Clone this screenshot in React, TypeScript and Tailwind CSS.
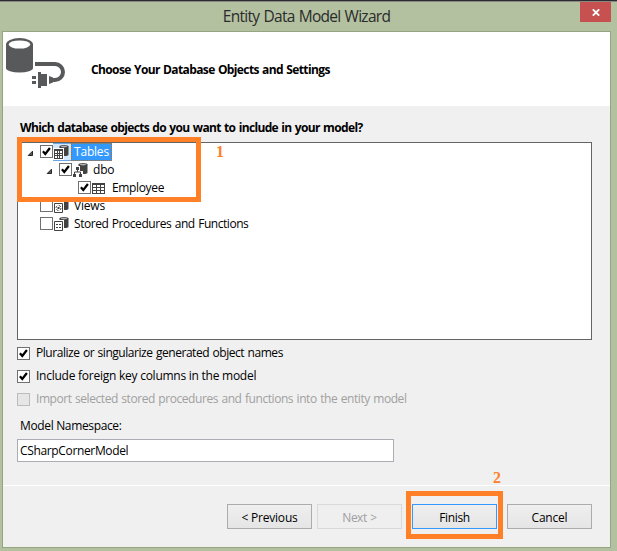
import type { ReactNode } from "react";

function CheckBox({ checked, disabled }: { checked?: boolean; disabled?: boolean }) {
  return (
    <span
      className={`block size-[13px] shrink-0 border ${
        disabled ? "border-[#bcbcbc] bg-[#e6e6e6]" : "border-[#707070] bg-white"
      }`}
    >
      {checked && (
        <svg viewBox="0 0 11 11" className="block size-[11px]">
          <path d="M1.9 5.2 L4.3 8 L8.9 2" fill="none" stroke="#000" strokeWidth="2.2" />
        </svg>
      )}
    </span>
  );
}

function Expander() {
  return (
    <svg viewBox="0 0 7 7" className="block size-[7px] shrink-0">
      <path d="M5.5 1.2 V5.5 H1.2 Z" fill="#595959" stroke="#262626" strokeWidth="1" />
    </svg>
  );
}

function Cylinder() {
  return (
    <>
      <path d="M6.5 2.5 V10.5 A4.5 1.5 0 0 0 15.5 10.5 V2.5 Z" fill="#424242" />
      <ellipse cx="11" cy="2.6" rx="4.5" ry="1.7" fill="#424242" />
      <ellipse cx="11" cy="2.6" rx="3.3" ry="0.8" fill="#b0b0b0" />
    </>
  );
}

function TreeIcon({ kind }: { kind: string }) {
  return (
    <svg viewBox="0 0 16 16" className="block size-4 shrink-0">
      {kind === "table" && (
        <>
          <rect x="1" y="3" width="13" height="11" fill="#424242" />
          <path
            d="M2 5h3v2h-3z M6 5h3v2h-3z M10 5h3v2h-3z M2 8h3v2h-3z M6 8h3v2h-3z M10 8h3v2h-3z M2 11h3v2h-3z M6 11h3v2h-3z M10 11h3v2h-3z"
            fill="#fff"
          />
        </>
      )}
      {kind === "schema" && (
        <>
          <Cylinder />
          <path d="M3 4h5v5h3v7h-11v-7h3z" fill="#fff" />
          <path d="M4 5h3v3h-3z M1 12h3v3h-3z M7 12h3v3h-3z" fill="#424242" />
          <path d="M5.5 8v2 M2.5 12v-2h6v2" fill="none" stroke="#424242" />
        </>
      )}
      {kind !== "table" && kind !== "schema" && (
        <>
          <Cylinder />
          <path d="M0 4h11v12h-11z" fill="#fff" />
          <path d="M1.5 5.5h8v9h-8z" fill="#fff" stroke="#424242" />
        </>
      )}
      {kind === "tables" && (
        <>
          <rect x="1" y="5" width="9" height="10" fill="#424242" />
          <path
            d="M2 7h2v2h-2z M5 7h1v2h-1z M7 7h2v2h-2z M2 10h2v1h-2z M5 10h1v1h-1z M7 10h2v1h-2z M2 12h2v2h-2z M5 12h1v2h-1z M7 12h2v2h-2z"
            fill="#fff"
          />
        </>
      )}
      {kind === "views" && (
        <>
          <circle cx="5.5" cy="10" r="2.5" fill="none" stroke="#424242" strokeWidth="1" strokeDasharray="2.4 1.5" />
          <path d="M4.5 9h2v2h-2z" fill="#424242" />
        </>
      )}
      {kind === "procs" && <path d="M3 8h2v1h-2z M6 8h2v1h-2z M3 11h2v1h-2z M6 11h2v1h-2z" fill="#424242" />}
    </svg>
  );
}

function TreeRow({
  indent,
  kind,
  checked,
  open,
  children,
}: {
  indent: string;
  kind: string;
  checked?: boolean;
  open?: boolean;
  children: ReactNode;
}) {
  return (
    <div className={`flex h-[18px] items-center ${indent}`}>
      <span className="w-[13px] pt-[3px]">{open && <Expander />}</span>
      <span className="pb-px">
        <CheckBox checked={checked} />
      </span>
      <span
        className={`flex h-[18px] items-center ${
          kind === "tables" ? "border-y border-[#66a7e8] bg-[#d1e8ff] pr-[2px]" : ""
        }`}
      >
        <TreeIcon kind={kind} />
      </span>
      {children}
    </div>
  );
}

function DatabaseLogo() {
  return (
    <svg viewBox="0 0 62 54" className="block h-[54px] w-[62px]">
      <path d="M3 7 V31 A13.5 4.5 0 0 0 30 31 V7 Z" fill="#58595b" />
      <ellipse cx="16.5" cy="7.5" rx="13.5" ry="6.5" fill="#58595b" />
      <ellipse cx="16.5" cy="7.5" rx="10.7" ry="4.1" fill="#fff" />
      <path d="M32 27 H52 A8 8 0 0 1 52 43 H50" fill="none" stroke="#58595b" strokeWidth="4" />
      <path
        d="M35 35h3v2h6v12h-6v2h-3z M46 39l4 1.5v5l-4 1.5z M29 39h4v3h-4z M29 44h4v3h-4z"
        fill="#58595b"
      />
    </svg>
  );
}

function Button({ children, look }: { children: ReactNode; look: string }) {
  return (
    <button
      className={`flex h-[25px] w-[85px] items-center justify-center border pt-[2px] ${look}`}
    >
      {children}
    </button>
  );
}

const normalLook = "border-[#acacac] bg-linear-to-b from-[#efefef] to-[#e5e5e5] tracking-[-0.2px]";

export default function App() {
  return (
    <div className="relative flex h-[551px] w-[617px] flex-col overflow-hidden border-t border-[#2d2a32] bg-[#b3c1a1] font-['Open_Sans','Noto_Sans',sans-serif] text-[12px] leading-[16px] tracking-[-0.35px] text-black">
      {/* Title bar */}
      <div className="flex h-[30px] shrink-0 items-start border-t border-[#878a80]">
        <h1 className="flex-1 pt-[2px] pl-[33px] text-center text-[15.5px] leading-[24px] tracking-[-0.72px] text-[#2b2b2b] [word-spacing:0.8px]">
          Entity Data Model Wizard
        </h1>
        <button className="mr-[6px] flex h-5 w-[31px] items-center justify-center bg-[#c75050]">
          <svg viewBox="0 0 8 7" className="block h-[7px] w-2">
            <path d="M0.8 0.3 L7.2 6.7 M7.2 0.3 L0.8 6.7" stroke="#fff" strokeWidth="1.8" />
          </svg>
        </button>
      </div>

      <div className="mr-[6px] ml-[2px] flex h-[517px] flex-col border border-[#95a483] bg-[#f0f0f0]">
        {/* Page header */}
        <header className="flex h-[74px] shrink-0 bg-white pt-[5px]">
          <DatabaseLogo />
          <h2 className="pt-[25px] pl-[26px] font-bold tracking-[-0.62px] [word-spacing:0.8px]">
            Choose Your Database Objects and Settings
          </h2>
        </header>

        <main className="flex flex-col px-[14px] pt-[14px]">
          <p className="pl-[3px] font-bold tracking-[-0.65px] [word-spacing:0.8px]">
            Which database objects do you want to include in your model?
          </p>

          <div className="mt-[6px] h-[198px] w-[575px] border border-[#646464] bg-white">
            <TreeRow indent="pl-[9px]" kind="tables" checked open>
              <span className="h-[18px] w-[41px] border border-dotted border-[#c06a10] bg-[#3399ff] pl-[2px] leading-[15px] tracking-[-0.2px] text-white">
                Tables
              </span>
            </TreeRow>
            <TreeRow indent="pl-[28px]" kind="schema" checked open>
              <span className="pb-px pl-[5px] tracking-[-0.2px]">dbo</span>
            </TreeRow>
            <TreeRow indent="pl-[47px]" kind="table" checked>
              <span className="pb-px pl-[5px]">Employee</span>
            </TreeRow>
            <TreeRow indent="pl-[9px]" kind="views">
              <span className="pb-px pl-[5px] tracking-[-0.2px]">Views</span>
            </TreeRow>
            <TreeRow indent="pl-[9px]" kind="procs">
              <span className="pb-px pl-[5px] tracking-[-0.45px] [word-spacing:0.8px]">
                Stored Procedures and Functions
              </span>
            </TreeRow>
          </div>

          <div className="mt-[5px] flex flex-col gap-[7px]">
            <label className="flex items-center gap-[6px]">
              <CheckBox checked />
              <span className="tracking-[-0.46px] [word-spacing:0.8px]">
                Pluralize or singularize generated object names
              </span>
            </label>
            <label className="flex items-center gap-[6px]">
              <CheckBox checked />
              <span className="tracking-[-0.25px]">Include foreign key columns in the model</span>
            </label>
            <label className="flex items-center gap-[6px] text-[#a0a0a0]">
              <CheckBox disabled />
              <span className="tracking-[-0.44px] [word-spacing:0.8px]">
                Import selected stored procedures and functions into the entity model
              </span>
            </label>
          </div>

          <div className="mt-[11px] pl-[3px]">Model Namespace:</div>
          <div className="mt-[5px] flex h-[23px] w-[377px] items-center border border-[#abadb3] bg-white pl-[2px]">
            CSharpCornerModel
          </div>
        </main>

        {/* Wizard buttons */}
        <footer className="mt-[23px] flex flex-1 items-start justify-end border-t border-white pt-[18px] pr-[18px]">
          <Button look={normalLook}>&lt; Previous</Button>
          <span className="w-[5px]" />
          <Button look="border-[#d9d9d9] bg-[#efefef] tracking-[-0.5px] text-[#a0a0a0] [word-spacing:1px]">
            Next &gt;
          </Button>
          <span className="w-[10px]" />
          <Button look="border-[#3399ff] bg-linear-to-b from-[#efefef] to-[#e5e5e5]">Finish</Button>
          <span className="w-[10px]" />
          <Button look={normalLook}>Cancel</Button>
        </footer>
      </div>

      {/* Step callouts */}
      <div className="absolute top-[136px] left-[17px] h-[65px] w-[184px] border-5 border-[#ff8027]" />
      <span className="absolute top-[143px] left-[216px] font-['Liberation_Serif',serif] text-[16px] font-bold text-[#ff8027]">
        1
      </span>
      <div className="absolute top-[490px] left-[406px] h-[48px] w-[97px] border-5 border-[#ff8027]" />
      <span className="absolute top-[469px] left-[493px] font-['Liberation_Serif',serif] text-[16px] font-bold text-[#ff8027]">
        2
      </span>
    </div>
  );
}
